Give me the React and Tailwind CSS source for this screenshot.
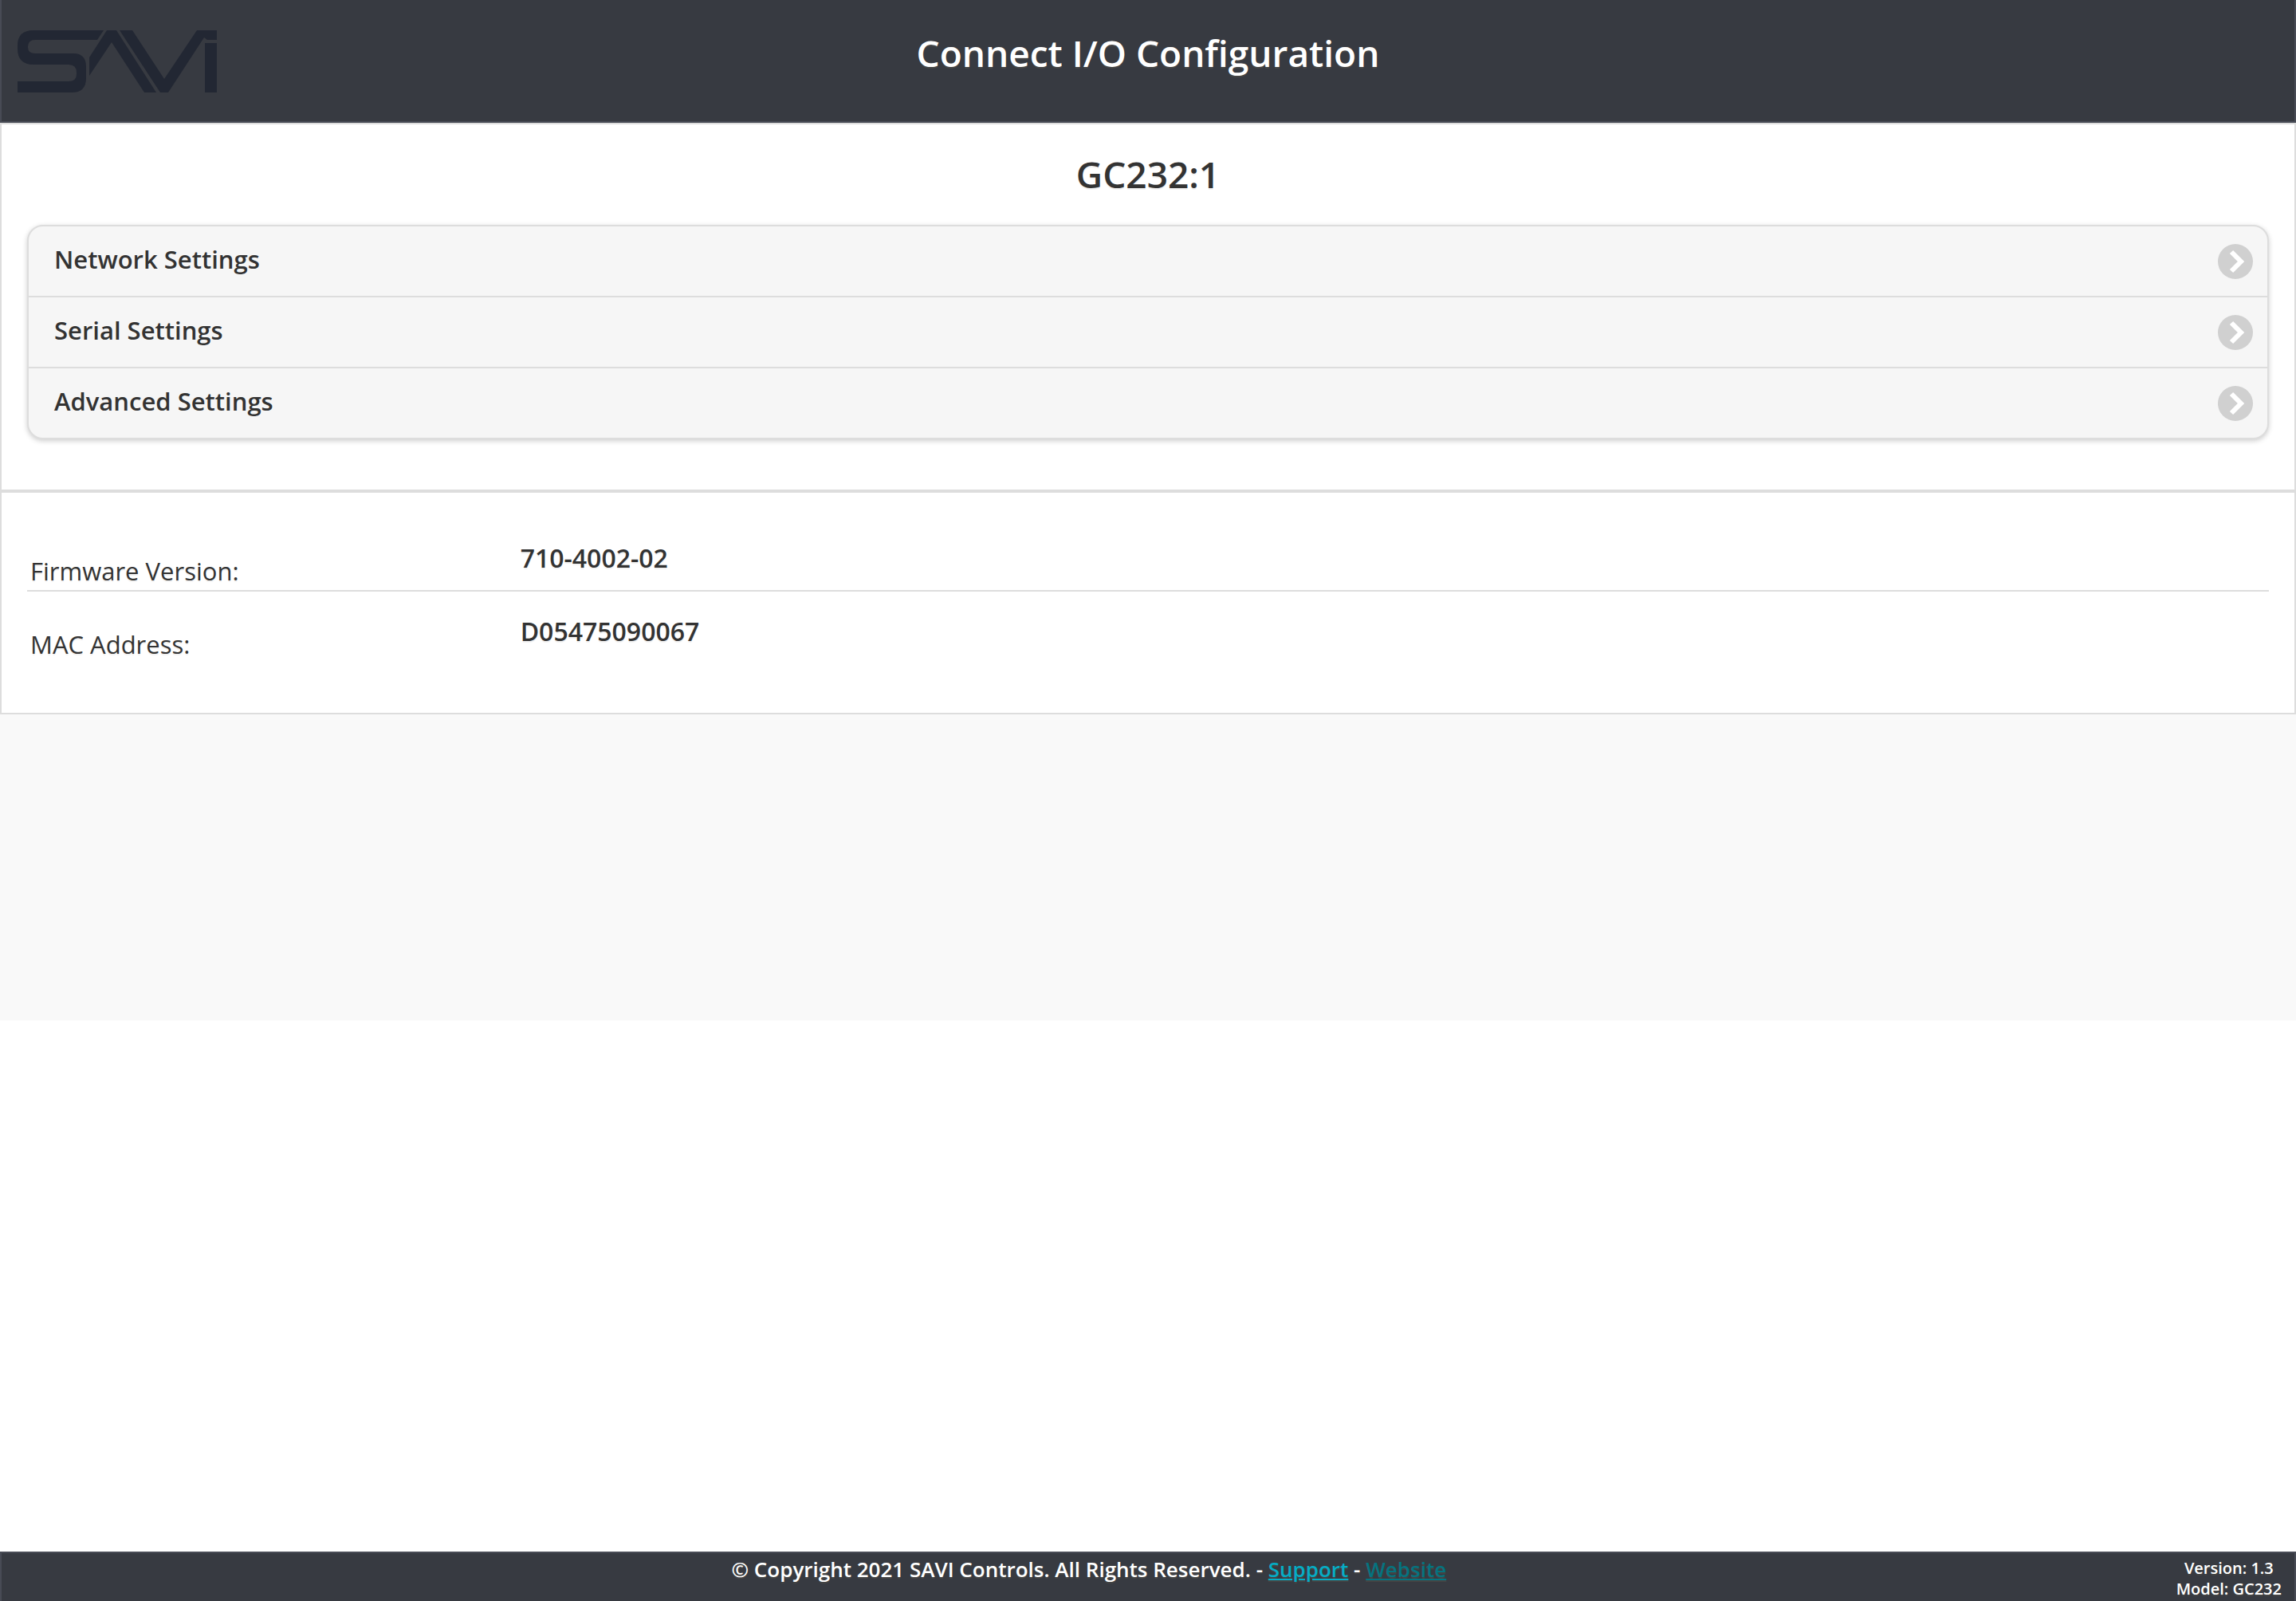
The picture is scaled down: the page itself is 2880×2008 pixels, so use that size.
const settings = ["Network Settings", "Serial Settings", "Advanced Settings"];

const details = [
  { label: "Firmware Version:", value: "710-4002-02" },
  { label: "MAC Address:", value: "D05475090067" },
];

function Logo() {
  return (
    <svg viewBox="0 0 250 78" className="mt-0.5 h-[78px] w-[250px]" fill="#222733" role="img" aria-label="SAVI">
      <path d="M108 0H20Q0 0 0 19V23Q0 43 20 43H64Q74 43 74 53V55Q74 64 64 64H0V78H68Q86 78 86 60V46Q86 29 70 29H22Q13 29 13 21Q13 12 22 12H100Z" />
      <path d="M112 0H124L174 78H159L118 15L90 57V34Z" />
      <path d="M128 0H144L184 61L225 0H250V12H238L234 9L189 78H179Z" />
      <path d="M235 16H250V78H235Z" />
    </svg>
  );
}

function ChevronBadge() {
  return (
    <svg viewBox="0 0 44 44" className="size-11 shrink-0" aria-hidden="true">
      <circle cx="22" cy="22" r="22" fill="#d0d0d0" />
      <path d="M17 10L29 22L17 34" fill="none" stroke="#fff" strokeWidth="6" />
    </svg>
  );
}

export default function App() {
  return (
    <div className="flex min-h-screen flex-col bg-white font-['Open_Sans',sans-serif] text-[31px] leading-10 text-[#333]">
      <header className="grid grid-cols-[1fr_auto_1fr] items-start border-x-2 border-b-2 border-[#484b55] bg-[#373a41] px-5 py-9">
        <Logo />
        <h1 className="text-[46px] leading-[60px] font-semibold text-white [text-shadow:0_2px_0_#444]">
          Connect I/O Configuration
        </h1>
      </header>

      <main className="bg-[#f9f9f9] pb-96 [text-shadow:0_2px_0_#f3f3f3]">
        <section className="border-2 border-[#ddd] bg-white px-8 pt-8 pb-[63px]">
          <h2 className="text-center text-[46px] leading-[60px] font-semibold">GC232:1</h2>
          <ul className="mt-[34px] divide-y-2 divide-[#ddd] overflow-hidden rounded-[20px] border-2 border-[#ddd] bg-[#f6f6f6] shadow-[0_2px_6px_rgba(0,0,0,0.2)]">
            {settings.map((name) => (
              <li key={name}>
                <button type="button" className="flex h-[87px] w-full items-center justify-between pr-[18px] pl-8 text-left font-semibold">
                  <span className="pb-1.5">{name}</span>
                  <ChevronBadge />
                </button>
              </li>
            ))}
          </ul>
        </section>

        <section className="border-2 border-[#ddd] bg-white px-8 pt-8 pb-[62px]">
          <dl className="divide-y-2 divide-[#ddd]">
            {details.map(({ label, value }) => (
              <div key={label} className="grid grid-cols-[22%_1fr] pt-[30px]">
                <dt className="pt-4 pb-1 pl-1">{label}</dt>
                <dd className="text-[32px] leading-10 font-semibold">{value}</dd>
              </div>
            ))}
          </dl>
        </section>
      </main>

      <footer className="mt-auto flex items-start border-x-2 border-t-2 border-[#484b55] bg-[#373a41] pr-4 font-semibold text-white [text-shadow:0_2px_0_#444]">
        <p className="flex-1 text-center text-[26px]">
          © Copyright 2021 SAVI Controls. All Rights Reserved. -{" "}
          <a href="#support" className="text-[#05adc5] underline">Support</a> -{" "}
          <a href="#website" className="text-[#05737f] underline">Website</a>
        </p>
        <p className="pt-1.5 pb-0.5 text-center text-[20px] leading-[26px]">
          Version: 1.3
          <br />
          Model: GC232
        </p>
      </footer>
    </div>
  );
}
